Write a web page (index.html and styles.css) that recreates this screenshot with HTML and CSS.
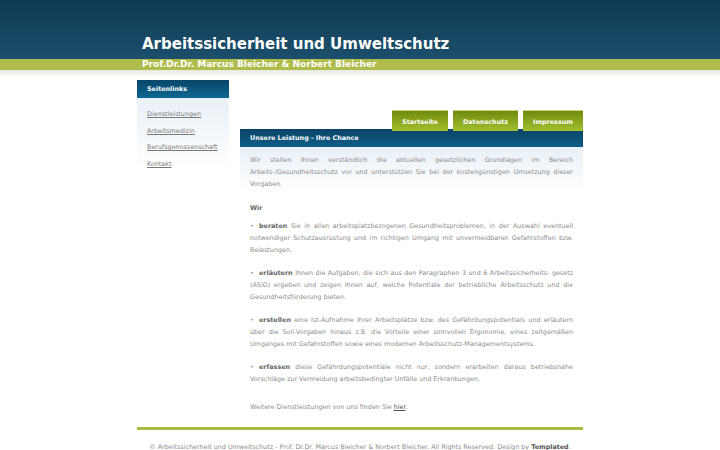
FILE: index.html
```html
<!DOCTYPE html>
<html lang="de">
<head>
<meta charset="utf-8">
<title>Arbeitssicherheit und Umweltschutz</title>
<link rel="stylesheet" href="styles.css">
</head>
<body>
<div class="header">
  <div class="wrap">
    <h1 class="site-title">Arbeitssicherheit und Umweltschutz</h1>
  </div>
</div>
<div class="band">
  <div class="wrap">
    <h2 class="site-sub">Prof.Dr.Dr. Marcus Bleicher &amp; Norbert Bleicher</h2>
  </div>
</div>
<div class="shadow"></div>
<div class="page wrap">
  <div class="sidebar">
    <div class="side-head">Seitenlinks</div>
    <ul class="side-links">
      <li><a href="#">Dienstleistungen</a></li>
      <li><a href="#">Arbeitsmedizin</a></li>
      <li><a href="#">Berufsgenossenschaft</a></li>
      <li><a href="#">Kontakt</a></li>
    </ul>
  </div>
  <div class="main">
    <div class="tabs">
      <a class="tab" href="#">Startseite</a>
      <a class="tab" href="#">Datenschutz</a>
      <a class="tab" href="#">Impressum</a>
    </div>
    <div class="main-head">Unsere Leistung - Ihre Chance</div>
    <div class="content">
      <p class="intro">Wir stellen Ihnen verständlich die aktuellen gesetzlichen Grundlagen im Bereich Arbeits-/Gesundheitsschutz vor und unterstützen Sie bei der kostengünstigen Umsetzung dieser Vorgaben.</p>
      <p class="wir"><strong>Wir</strong></p>
      <p class="item first"><span class="dot">•</span><strong>beraten</strong> Sie in allen arbeitsplatzbezogenen Gesundheitsproblemen, in der Auswahl eventuell notwendiger Schutzausrüstung und im richtigen Umgang mit unvermeidbaren Gefahrstoffen bzw. Belastungen.</p>
      <p class="item"><span class="dot">•</span><strong>erläutern</strong> Ihnen die Aufgaben, die sich aus den Paragraphen 3 und 6 Arbeitssicherheits- gesetz (ASiG) ergeben und zeigen Ihnen auf, welche Potentiale der betriebliche Arbeitsschutz und die Gesundheitsförderung bieten.</p>
      <p class="item"><span class="dot">•</span><strong>erstellen</strong> eine Ist-Aufnahme Ihrer Arbeitsplätze bzw. des Gefährdungspotentials und erläutern über die Soll-Vorgaben hinaus z.B. die Vorteile einer sinnvollen Ergonomie, eines zeitgemäßen Umganges mit Gefahrstoffen sowie eines modernen Arbeitsschutz-Managementsystems.</p>
      <p class="item"><span class="dot">•</span><strong>erfassen</strong> diese Gefährdungspotentiale nicht nur, sondern erarbeiten daraus betriebsnahe Vorschläge zur Vermeidung arbeitsbedingter Unfälle und Erkrankungen.</p>
      <p class="more">Weitere Dienstleistungen von uns finden Sie <a href="#">hier</a>.</p>
    </div>
  </div>
</div>
<div class="footer wrap">
  <p>© Arbeitssicherheit und Umweltschutz - Prof. Dr.Dr. Marcus Bleicher &amp; Norbert Bleicher. All Rights Reserved. Design by <a href="#">Templated</a>.</p>
</div>
</body>
</html>
```

FILE: styles.css
```css
html, body {
  margin: 0;
  padding: 0;
  background: #ffffff;
}
body {
  font-family: "DejaVu Sans", Verdana, sans-serif;
  font-size: 6.4px;
  color: #8e8e8e;
}
.wrap {
  width: 446px;
  margin: 0 auto;
}
.header {
  height: 59px;
  background: linear-gradient(#0e3a53, #1c4f6c);
}
.header .wrap {
  height: 59px;
  display: flex;
  align-items: flex-end;
}
.site-title {
  margin: 0 0 5px 5px;
  font-size: 15px;
  line-height: 20px;
  font-weight: bold;
  color: #ffffff;
}
.band {
  height: 11px;
  background: #afbb4b;
}
.site-sub {
  margin: 0 0 0 5px;
  font-size: 9px;
  line-height: 11px;
  font-weight: bold;
  color: #ffffff;
}
.shadow {
  height: 7px;
  background: linear-gradient(#e6e9e3, #ffffff);
}
.page {
  display: flex;
  gap: 11px;
  margin-top: 3px;
}
.sidebar {
  width: 92px;
  flex: none;
}
.side-head {
  height: 18px;
  line-height: 18px;
  padding-left: 10px;
  font-weight: bold;
  color: #ffffff;
  background: linear-gradient(#08466a, #0e6791);
}
.side-links {
  list-style: none;
  margin: 0;
  padding: 8px 0 6px 10px;
  background: linear-gradient(#e9f0f7, #ffffff 70px);
}
.side-links li {
  line-height: 16.6px;
}
.side-links a {
  color: #7a7a7a;
  text-decoration: underline;
}
.main {
  flex: 1;
  min-width: 0;
}
.tabs {
  display: flex;
  justify-content: flex-end;
  gap: 5px;
  margin-top: 30px;
  height: 19px;
}
.tab {
  display: block;
  padding: 0 10px;
  line-height: 20px;
  height: 19px;
  padding-top: 1px;
  font-weight: bold;
  color: #ffffff;
  text-decoration: none;
  background: linear-gradient(#6f8b0e, #a3c02e);
  border-top: 1px solid #c9d88a;
}
.tab:last-child {
  width: 40px;
}
.main-head {
  height: 18px;
  line-height: 18px;
  padding-left: 10px;
  font-weight: bold;
  color: #ffffff;
  background: linear-gradient(#0a4367, #0d5f88);
}
.content {
  padding: 7px 10px 0 10px;
  background: linear-gradient(#e8f0f7, #ffffff 45px);
}
.content p {
  margin: 0;
  line-height: 12px;
  text-align: justify;
}
.content strong {
  color: #666666;
}
.content .wir {
  margin-top: 12px;
}
.content .item {
  margin-top: 11px;
}
.content .item.first {
  margin-top: 6px;
}
.dot {
  display: inline-block;
  width: 9px;
  color: #9a9a9a;
}
.content .more {
  margin-top: 16px;
}
.more a {
  color: #555555;
  text-decoration: underline;
}
.footer {
  margin-top: 14px;
  border-top: 3px solid #a8bd45;
}
.footer p {
  margin: 0;
  padding-top: 13px;
  text-align: center;
  line-height: 8px;
  color: #8e8e8e;
}
.footer a {
  color: #555555;
  font-weight: bold;
  text-decoration: none;
}
```
